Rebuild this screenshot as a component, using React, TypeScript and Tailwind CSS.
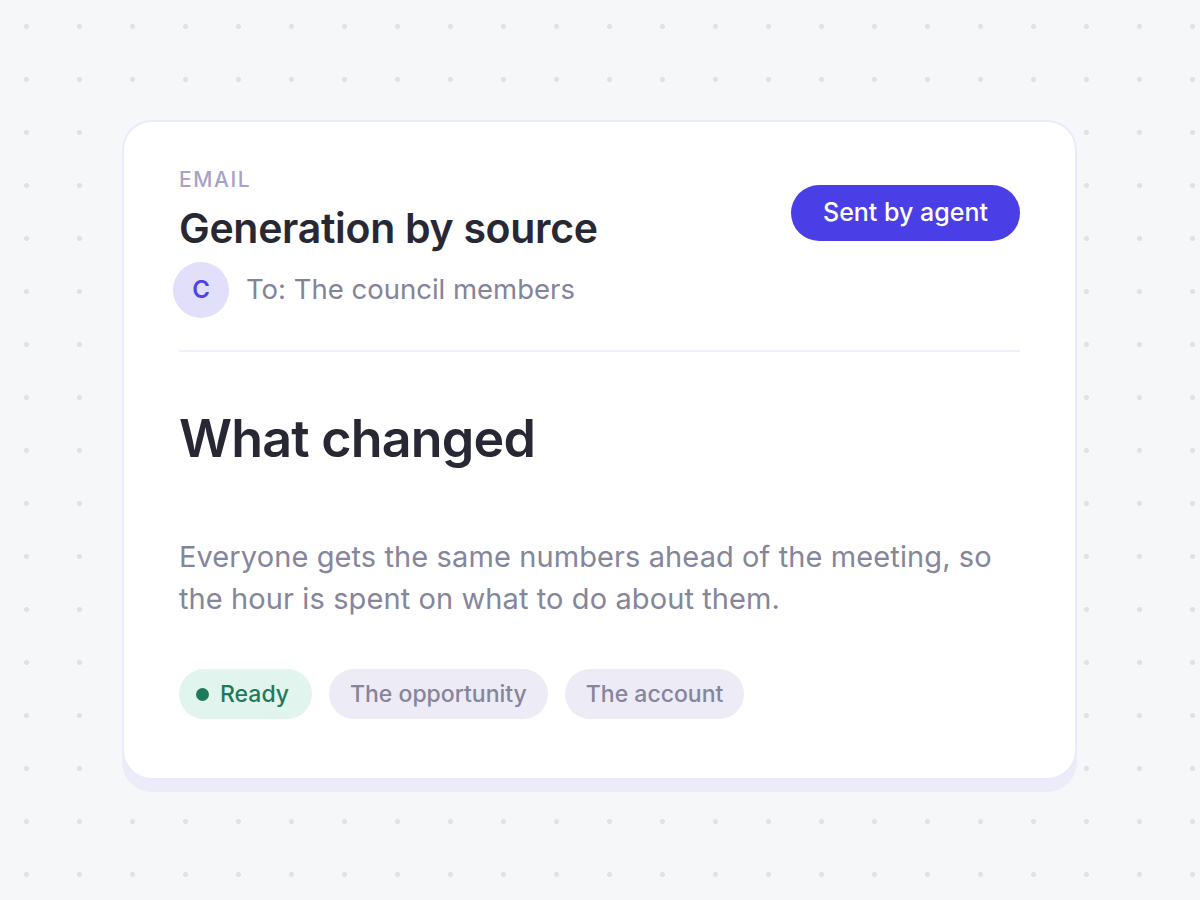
import React from "react";

export default function App() {
  return (
    <div
      className="w-[1200px] h-[900px] bg-[#f6f7f9] pt-[120px] pl-[122px]"
      style={{
        backgroundImage: "radial-gradient(circle, #e1e1e6 2.2px, transparent 2.8px)",
        backgroundSize: "53px 53px",
        backgroundPosition: "0px 0px",
        fontFamily: "Inter, 'Noto Sans', sans-serif",
      }}
    >
      <div className="w-[955px] h-[660px] bg-white rounded-[30px] border-2 border-[#ebeafc] shadow-[0_12px_0_#ececf8] px-[55px] pt-[44px]">
        <div className="flex justify-between items-start">
          <div className="flex flex-col">
            <div className="text-[21px] leading-[28px] tracking-[1.6px] font-medium text-[#a7a2c6]">EMAIL</div>
            <div className="mt-[10px] text-[41px] leading-[48px] font-semibold tracking-[-0.3px] text-[#272833]">
              Generation by source
            </div>
            <div className="mt-[10px] flex items-center gap-[17px] -ml-[6px]">
              <div className="w-[56px] h-[56px] rounded-full bg-[#e2dffb] flex items-center justify-center text-[24px] font-semibold text-[#4f43e8]">
                C
              </div>
              <div className="text-[27.5px] text-[#83839a]">To: The council members</div>
            </div>
          </div>
          <div className="mt-[19px] h-[56px] px-[32px] rounded-full bg-[#4a3fe6] text-white text-[25px] font-medium flex items-center">
            Sent by agent
          </div>
        </div>
        <div className="mt-[32px] h-[2px] bg-[#efeef9]" />
        <div className="mt-[57px] text-[52px] leading-[60px] font-semibold tracking-[-0.8px] text-[#272833]">
          What changed
        </div>
        <div className="mt-[67px] text-[29px] leading-[42px] tracking-[0.1px] text-[#85859b] max-w-[830px]">
          Everyone gets the same numbers ahead of the meeting, so the hour is spent on what to do about them.
        </div>
        <div className="mt-[49px] flex gap-[17px]">
          <div className="h-[50px] pl-[17px] pr-[23px] rounded-full bg-[#e1f4ee] flex items-center gap-[11px] text-[23px] font-medium text-[#1f7a5c]">
            <span className="w-[13px] h-[13px] rounded-full bg-[#1f7a5c]" />
            Ready
          </div>
          <div className="h-[50px] px-[21px] rounded-full bg-[#edebf6] flex items-center text-[23px] font-medium text-[#85859b]">
            The opportunity
          </div>
          <div className="h-[50px] px-[21px] rounded-full bg-[#edebf6] flex items-center text-[23px] font-medium text-[#85859b]">
            The account
          </div>
        </div>
      </div>
    </div>
  );
}
